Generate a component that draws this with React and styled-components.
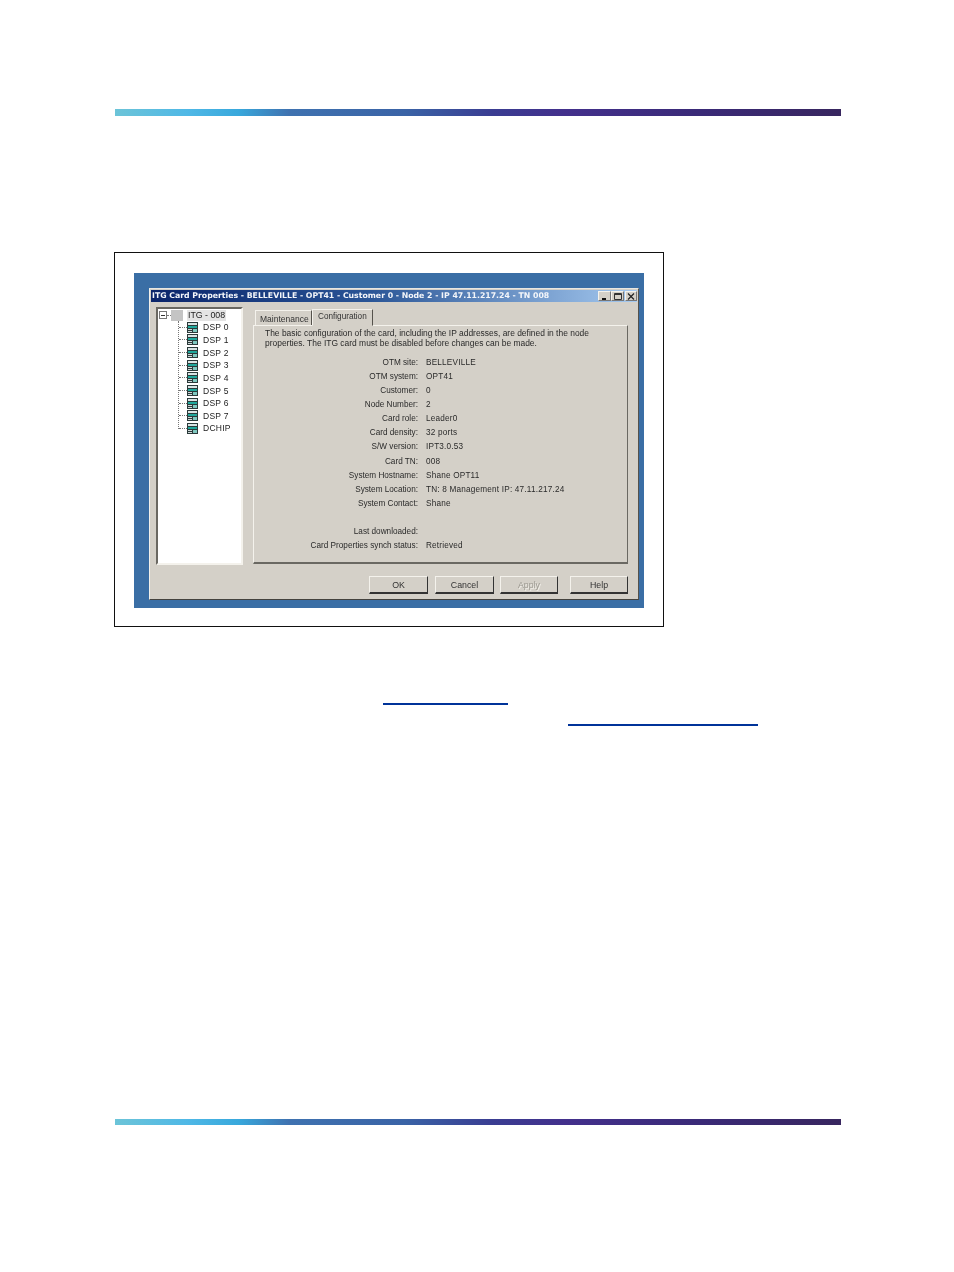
import React from "react";
import styled, { createGlobalStyle } from "styled-components";

const GlobalStyle = createGlobalStyle`
html, body {
    margin: 0;
    padding: 0;
    background: #fff;
}
`;

const Page = styled.div`
width: 954px;
height: 1272px;
display: flex;
flex-direction: column;
box-sizing: border-box;
padding-top: 109px;
overflow: hidden;
font-family: "Liberation Sans", Arial, sans-serif;
`;

const Band = styled.div`
width: 726px;
height: 7px;
margin-left: 115px;
flex: none;
background: linear-gradient(90deg, #6cc4d8 0%, #4fb8e6 10%, #38a8dc 17%, #3f72b0 24%, #3a63a6 40%, #3a3d92 52%, #43308c 62%, #3a2a78 80%, #38265f 100%);
`;

const FigureFrame = styled.div`
width: 550px;
height: 375px;
margin: 136px 0 0 114px;
box-sizing: border-box;
border: 1px solid #111;
padding: 20px 19px 18px 19px;
flex: none;
`;

const Desktop = styled.div`
height: 335px;
background: #3a6ea5;
padding: 15px 5px 8px 15px;
box-sizing: border-box;
`;

const Window = styled.div`
height: 312px;
background: #d4d0c8;
box-sizing: border-box;
border-top: 1px solid #e8e6e0;
border-left: 1px solid #f2f0ea;
border-right: 1px solid #55524c;
border-bottom: 1px solid #44423e;
padding: 1px;
display: flex;
flex-direction: column;
filter: blur(0.45px);
`;

const TitleBar = styled.div`
height: 12px;
flex: none;
display: flex;
align-items: center;
justify-content: space-between;
padding: 0 0 0 1px;
background: linear-gradient(90deg, #0a246a 0%, #2a5596 45%, #a6caf0 100%);
`;

const TitleText = styled.span`
color: #f4f6fa;
font-family: "DejaVu Sans", Verdana, sans-serif;
font-size: 7.77px;
font-weight: bold;
white-space: nowrap;
margin-top: -1px;
`;

const TitleButtons = styled.div`
display: flex;
`;

const TitleButton = styled.div`
width: ${props => props.$gap ? "12px" : "13px"};
height: 10px;
margin-left: ${props => props.$gap ? "1px" : "0"};
box-sizing: border-box;
background: #d4d0c8;
border: 1px solid;
border-color: #f4f2ec #777 #777 #f4f2ec;
display: flex;
align-items: center;
justify-content: center;
`;

const Body = styled.div`
flex: 1;
display: flex;
padding: 5px 9px 0 5px;
`;

const Tree = styled.div`
width: 87px;
height: 258px;
flex: none;
box-sizing: border-box;
background: #fff;
border: 2px solid;
border-color: #6a6862 #f4f2ec #f4f2ec #6a6862;
padding: 0 0 0 1px;
font-size: 8.5px;
color: #222;
`;

const RootRow = styled.div`
height: 12px;
display: flex;
align-items: center;
`;

const Expander = styled.div`
width: 8px;
height: 8px;
box-sizing: border-box;
border: 1px solid #777;
display: flex;
align-items: center;
justify-content: center;
flex: none;
`;

const ExpanderMinus = styled.div`
width: 4px;
height: 1px;
background: #333;
`;

const Connector = styled.div`
width: 4px;
border-top: 1px dotted #777;
flex: none;
`;

const RootIcon = styled.div`
width: 12px;
height: 11px;
background: #c4c4c4;
flex: none;
`;

const RootLabel = styled.span`
margin-left: 4px;
padding: 0 1px;
background: #e4e4e4;
font-size: 8.8px;
line-height: 11px;
`;

const Children = styled.div`
margin-left: 19px;
border-left: 1px dotted #777;
height: 108px;
`;

const ChildRow = styled.div`
height: 12.65px;
display: flex;
align-items: center;
`;

const ChildConnector = styled.div`
width: 8px;
border-top: 1px dotted #777;
flex: none;
`;

const ChildLabel = styled.span`
margin-left: 5px;
letter-spacing: 0.25px;
white-space: nowrap;
`;

const Content = styled.div`
flex: 1;
margin-left: 10px;
display: flex;
flex-direction: column;
`;

const Tabs = styled.div`
height: 18px;
display: flex;
align-items: flex-end;
padding-left: 2px;
flex: none;
`;

const Tab = styled.div`
height: ${props => props.$active ? "17px" : "15px"};
box-sizing: border-box;
padding: ${props => props.$active ? "2px 5px 0" : "3px 4px 0"};
width: ${props => props.$active ? "61px" : "57px"};
background: #d4d0c8;
border-top: 1px solid #f4f2ec;
border-left: 1px solid #f4f2ec;
border-right: 1px solid #55524c;
border-bottom: ${props => props.$active ? "1px solid #d4d0c8" : "none"};
font-size: ${props => props.$active ? "8.2px" : "8.5px"};
color: #333;
white-space: nowrap;
position: relative;
margin-bottom: ${props => props.$active ? "-1px" : "0"};
`;

const Panel = styled.div`
width: 375px;
height: 239px;
box-sizing: border-box;
border: 1px solid;
border-color: #f4f2ec #6a6862 #6a6862 #f4f2ec;
border-bottom-width: 2px;
padding: 2px 8px 0 11px;
color: #2a2a2a;
font-size: 8.2px;
`;

const Intro = styled.p`
margin: 0 0 8px 0;
font-size: 8.45px;
line-height: 10px;
white-space: nowrap;
`;

const Rows = styled.div`
display: grid;
grid-template-columns: 164px 1fr;
column-gap: 8px;
grid-auto-rows: 14.08px;
margin-left: -11px;
`;

const Label = styled.div`
text-align: right;
line-height: 14.08px;
white-space: nowrap;
`;

const Value = styled.div`
line-height: 14.08px;
white-space: nowrap;
letter-spacing: 0.2px;
`;

const Actions = styled.div`
display: flex;
padding: 6px 9px 4px 0;
justify-content: flex-end;
`;

const Button = styled.div`
width: ${props => props.$width}px;
height: 18px;
margin-left: ${props => props.$gap}px;
box-sizing: border-box;
border: 1px solid;
border-color: #f4f2ec #333 #333 #f4f2ec;
border-bottom-width: 2px;
display: flex;
align-items: center;
justify-content: center;
font-size: 8.8px;
color: ${props => props.$disabled ? "#9a978f" : "#333"};
text-shadow: ${props => props.$disabled ? "1px 1px 0 #f4f2ec" : "none"};
`;

const LinkRule = styled.div`
height: 2px;
background: #003399;
flex: none;
width: ${props => props.$width}px;
margin-left: ${props => props.$left}px;
margin-top: ${props => props.$top}px;
`;

const BottomBand = styled(Band)`
margin-top: 393px;
height: 6px;
`;

const dsps = ["DSP 0", "DSP 1", "DSP 2", "DSP 3", "DSP 4", "DSP 5", "DSP 6", "DSP 7", "DCHIP"];

const details = [
    ["OTM site:", "BELLEVILLE"],
    ["OTM system:", "OPT41"],
    ["Customer:", "0"],
    ["Node Number:", "2"],
    ["Card role:", "Leader0"],
    ["Card density:", "32 ports"],
    ["S/W version:", "IPT3.0.53"],
    ["Card TN:", "008"],
    ["System Hostname:", "Shane OPT11"],
    ["System Location:", "TN: 8 Management IP: 47.11.217.24"],
    ["System Contact:", "Shane"],
    ["", ""],
    ["Last downloaded:", ""],
    ["Card Properties synch status:", "Retrieved"],
];

function CardIcon() {
    return (
        <svg width="11" height="11" viewBox="0 0 11 11" style={{ flex: "none" }}>
            <rect x="0" y="0" width="11" height="11" fill="#2b3a3a" />
            <rect x="1" y="1" width="9" height="2" fill="#d8e4e4" />
            <rect x="1" y="4" width="9" height="2" fill="#1fa89c" />
            <rect x="1" y="7" width="4" height="1" fill="#cfd8d8" />
            <rect x="6" y="7" width="4" height="3" fill="#7fc8c0" />
            <rect x="1" y="9" width="4" height="1" fill="#cfd8d8" />
        </svg>
    );
}

function WindowGlyph({ type }) {
    return (
        <svg width="8" height="7" viewBox="0 0 8 7">
            {type === "min" && <rect x="1" y="5" width="4" height="2" fill="#111" />}
            {type === "max" && <path d="M0.5 0.5h7v6h-7zM0.5 1.5h7" fill="none" stroke="#333" />}
            {type === "close" && <path d="M1 0.5l6 6M7 0.5l-6 6" stroke="#222" strokeWidth="1.2" />}
        </svg>
    );
}

function App() {
    return (
        <Page>
            <GlobalStyle />
            <Band />
            <FigureFrame>
                <Desktop>
                    <Window>
                        <TitleBar>
                            <TitleText>ITG Card Properties - BELLEVILLE - OPT41 - Customer 0 - Node 2 - IP 47.11.217.24 - TN 008</TitleText>
                            <TitleButtons>
                                <TitleButton><WindowGlyph type="min" /></TitleButton>
                                <TitleButton><WindowGlyph type="max" /></TitleButton>
                                <TitleButton $gap><WindowGlyph type="close" /></TitleButton>
                            </TitleButtons>
                        </TitleBar>
                        <Body>
                            <Tree>
                                <RootRow>
                                    <Expander><ExpanderMinus /></Expander>
                                    <Connector />
                                    <RootIcon />
                                    <RootLabel>ITG - 008</RootLabel>
                                </RootRow>
                                <Children>
                                    {dsps.map(name => (
                                        <ChildRow key={name}>
                                            <ChildConnector />
                                            <CardIcon />
                                            <ChildLabel>{name}</ChildLabel>
                                        </ChildRow>
                                    ))}
                                </Children>
                            </Tree>
                            <Content>
                                <Tabs>
                                    <Tab>Maintenance</Tab>
                                    <Tab $active>Configuration</Tab>
                                </Tabs>
                                <Panel>
                                    <Intro>
                                        The basic configuration of the card, including the IP addresses, are defined in the node<br />
                                        properties.  The ITG card must be disabled before changes can be made.
                                    </Intro>
                                    <Rows>
                                        {details.map(([label, value], i) => (
                                            <React.Fragment key={i}>
                                                <Label>{label}</Label>
                                                <Value>{value}</Value>
                                            </React.Fragment>
                                        ))}
                                    </Rows>
                                </Panel>
                            </Content>
                        </Body>
                        <Actions>
                            <Button $width={59} $gap={0}>OK</Button>
                            <Button $width={59} $gap={7}>Cancel</Button>
                            <Button $width={58} $gap={6} $disabled>Apply</Button>
                            <Button $width={58} $gap={12}>Help</Button>
                        </Actions>
                    </Window>
                </Desktop>
            </FigureFrame>
            <LinkRule $width={125} $left={383} $top={76} />
            <LinkRule $width={190} $left={568} $top={19} />
            <BottomBand />
        </Page>
    );
}

export default App;
